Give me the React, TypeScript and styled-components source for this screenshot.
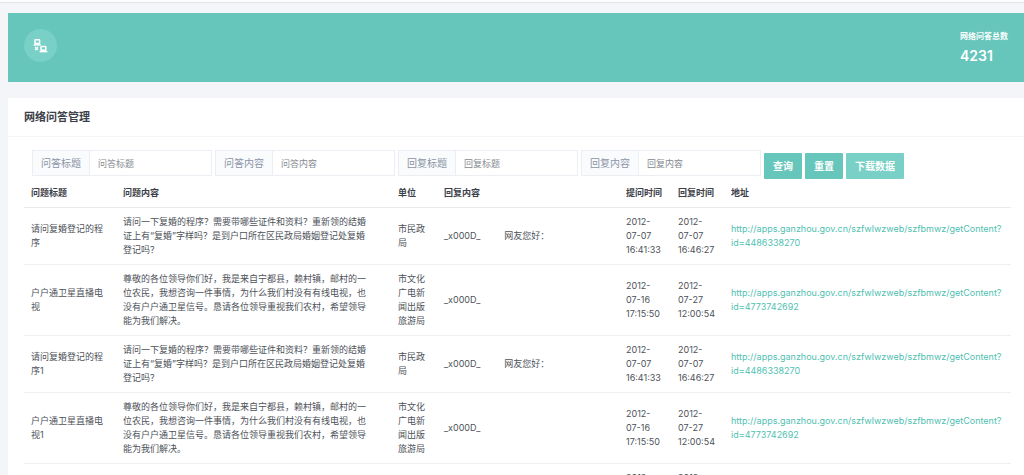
import React from "react";
import styled, { createGlobalStyle } from "styled-components";

const teal = "#66c6bb";
const tealLight = "#78d0c6";
const ink = "#4d5259";
const heading = "#3c4048";
const line = "#eff0f2";

const GlobalStyle = createGlobalStyle`
  *, *::before, *::after { box-sizing: border-box; }
  html { background: #f3f5f9; }
  body {
    margin: 0;
    color: ${ink};
    font: 400 9px/14px Inter, "Noto Sans CJK SC", sans-serif;
  }
  input, button { font-family: inherit; }
`;

const Page = styled.div`
  height: 100vh;
  overflow: hidden;
`;

const TopBar = styled.header`
  height: 3px;
  background: #fcfcfd;
  border-bottom: 1px solid #e2e4e9;
`;

const Main = styled.main`
  display: flex;
  flex-direction: column;
  gap: 16px;
  padding: 10px 0 0 8px;
`;

const Banner = styled.section`
  display: flex;
  justify-content: space-between;
  align-items: flex-start;
  padding: 16px 13px 16px 16px;
  min-height: 69px;
  background: ${teal};
  color: #fff;
`;

const Badge = styled.span`
  display: flex;
  align-items: center;
  justify-content: center;
  width: 33px;
  height: 33px;
  border-radius: 50%;
  background: ${tealLight};
`;

const Stat = styled.div`
  display: flex;
  flex-direction: column;
  gap: 4px;
  min-width: 51px;
`;

const StatLabel = styled.span`
  font-size: 8px;
  line-height: 14px;
  font-weight: 700;
`;

const StatValue = styled.span`
  font-size: 14px;
  line-height: 18px;
  font-weight: 600;
`;

const Card = styled.section`
  background: #fff;
`;

const CardTitle = styled.h1`
  margin: 0;
  padding: 10px 16px;
  border-bottom: 1px solid #f4f4f6;
  color: ${heading};
  font-size: 11px;
  line-height: 18px;
  font-weight: 600;
`;

const CardBody = styled.div`
  padding: 13px 13px 0 16px;
`;

const Filters = styled.form`
  display: flex;
  gap: 3px;
  padding-left: 8px;
`;

const Field = styled.label`
  display: flex;
  width: 180px;
  height: 26px;
  border: 1px solid #ebeef3;
`;

const FieldName = styled.span`
  flex: none;
  padding: 0 8px;
  border-right: 1px solid #ebeef3;
  background: #f9fbfd;
  color: #8b95a5;
  font-size: 10px;
  line-height: 24px;
`;

const FieldInput = styled.input`
  flex: 1;
  min-width: 0;
  padding: 0 8px;
  border: 0;
  outline: 0;
  background: #fff;
  color: ${ink};
  font-size: 9px;
  &::placeholder { color: #868a90; opacity: 1; }
`;

const Button = styled.button<{ $light?: boolean }>`
  height: 26px;
  margin-top: 3px;
  padding: 0 9px;
  border: 0;
  border-radius: 1px;
  background: ${(p) => (p.$light ? tealLight : teal)};
  color: #fff;
  font-size: 10px;
  line-height: 26px;
  font-weight: 600;
`;

const Table = styled.table`
  width: 100%;
  table-layout: fixed;
  border-collapse: separate;
  border-spacing: 0;
`;

const Col = styled.col<{ $width?: string }>`
  width: ${(p) => p.$width ?? "auto"};
`;

const Th = styled.th`
  padding: 7px;
  border-bottom: 1px solid #e9eaed;
  color: ${heading};
  font-weight: 600;
  text-align: left;
  white-space: nowrap;
`;

const Td = styled.td<{ $roomy?: boolean }>`
  padding: 7px ${(p) => (p.$roomy ? "20px" : "7px")} 7px 7px;
  border-bottom: 1px solid ${line};
  vertical-align: middle;
`;

const Reply = styled.span`
  display: flex;
  gap: 24px;
`;

const Link = styled.a`
  color: #4fbfb1;
  text-decoration: none;
`;

const NetworkIcon = () => (
  <svg width="15" height="15" viewBox="0 0 15 15" fill="none" stroke="#fff" aria-hidden="true">
    <rect x="2" y="1.7" width="4.6" height="3.8" rx=".5" strokeWidth="1.5" />
    <path d="M.6 6.9h7.2" strokeWidth="1.5" />
    <rect x="8" y="8.4" width="4.8" height="3.8" rx=".5" strokeWidth="1.5" />
    <path d="M6.6 13.6h7.8" strokeWidth="1.5" />
    <path d="M2 9l3 3M5 9l-3 3" strokeWidth="1.3" />
  </svg>
);

const filters = ["问答标题", "问答内容", "回复标题", "回复内容"];
const headers = ["问题标题", "问题内容", "单位", "回复内容", "提问时间", "回复时间", "地址"];
const widths = ["92px", "275px", "46px", "182px", "52px", "53px", undefined];

type Row = {
  title?: string;
  content?: string;
  unit?: string;
  reply: string[];
  asked: string;
  replied: string;
  id?: string;
};

const marriage: Row = {
  content:
    "请问一下复婚的程序？需要带哪些证件和资料？重新领的结婚证上有“复婚”字样吗？是到户口所在区民政局婚姻登记处复婚登记吗？",
  unit: "市民政局",
  reply: ["_x000D_", "网友您好："],
  asked: "2012-07-07 16:41:33",
  replied: "2012-07-07 16:46:27",
  id: "4486338270",
};

const satellite: Row = {
  content:
    "尊敬的各位领导你们好，我是来自宁都县，赖村镇，邮村的一位农民，我想咨询一件事情，为什么我们村没有有线电视，也没有户户通卫星信号。恳请各位领导重视我们农村，希望领导能为我们解决。",
  unit: "市文化广电新闻出版旅游局",
  reply: ["_x000D_"],
  asked: "2012-07-16 17:15:50",
  replied: "2012-07-27 12:00:54",
  id: "4773742692",
};

const rows: Row[] = [
  { ...marriage, title: "请问复婚登记的程序" },
  { ...satellite, title: "户户通卫星直播电视" },
  { ...marriage, title: "请问复婚登记的程序1" },
  { ...satellite, title: "户户通卫星直播电视1" },
  { reply: [], asked: "2012-", replied: "2012-" },
];

const base = "http://apps.ganzhou.gov.cn/szfwlwzweb/szfbmwz/getContent?";

export default function App() {
  return (
    <Page>
      <GlobalStyle />
      <TopBar />
      <Main>
        <Banner>
          <Badge>
            <NetworkIcon />
          </Badge>
          <Stat>
            <StatLabel>网络问答总数</StatLabel>
            <StatValue>4231</StatValue>
          </Stat>
        </Banner>
        <Card>
          <CardTitle>网络问答管理</CardTitle>
          <CardBody>
            <Filters onSubmit={(e) => e.preventDefault()}>
              {filters.map((name) => (
                <Field key={name}>
                  <FieldName>{name}</FieldName>
                  <FieldInput type="text" placeholder={name} />
                </Field>
              ))}
              <Button type="submit">查询</Button>
              <Button type="reset">重置</Button>
              <Button type="button" $light>下载数据</Button>
            </Filters>
            <Table>
              <colgroup>
                {widths.map((w, i) => (
                  <Col key={i} $width={w} />
                ))}
              </colgroup>
              <thead>
                <tr>
                  {headers.map((h) => (
                    <Th key={h} scope="col">{h}</Th>
                  ))}
                </tr>
              </thead>
              <tbody>
                {rows.map((r, i) => (
                  <tr key={i}>
                    <Td>{r.title}</Td>
                    <Td $roomy>{r.content}</Td>
                    <Td>{r.unit}</Td>
                    <Td>
                      <Reply>
                        {r.reply.map((part) => (
                          <span key={part}>{part}</span>
                        ))}
                      </Reply>
                    </Td>
                    <Td>{r.asked}</Td>
                    <Td>{r.replied}</Td>
                    <Td>
                      {r.id && (
                        <Link href={`${base}id=${r.id}`}>
                          {base}
                          <wbr />
                          id={r.id}
                        </Link>
                      )}
                    </Td>
                  </tr>
                ))}
              </tbody>
            </Table>
          </CardBody>
        </Card>
      </Main>
    </Page>
  );
}
